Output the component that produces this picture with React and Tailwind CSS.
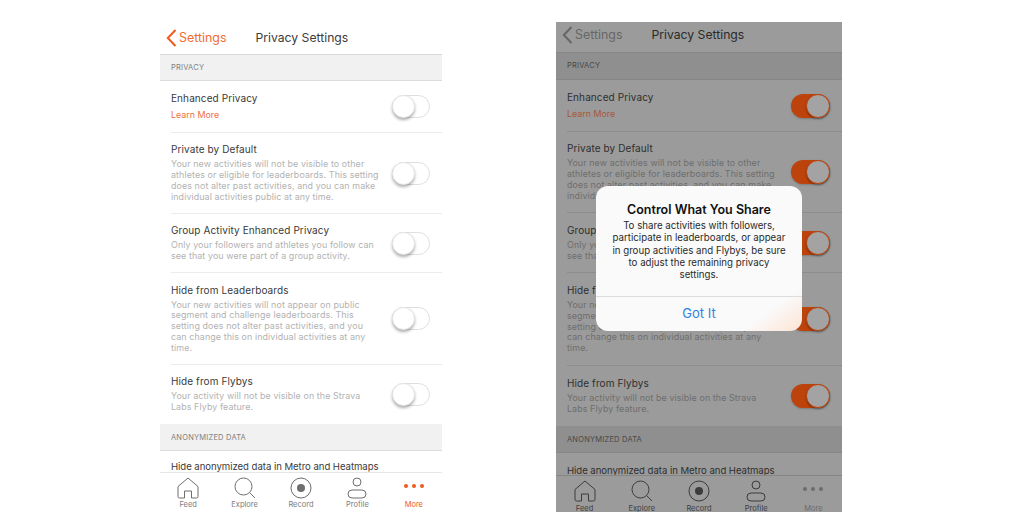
const font = { fontFamily: '"Inter", "Liberation Sans", sans-serif' };

const rows = [
  { title: "Enhanced Privacy", link: "Learn More", h: "h-[52px]", h2: "h-[52px]" },
  { title: "Private by Default", lines: ["Your new activities will not be visible to other", "athletes or eligible for leaderboards. This setting", "does not alter past activities, and you can make", "individual activities public at any time."], h: "h-[81px]", h2: "h-[81px]" },
  { title: "Group Activity Enhanced Privacy", lines: ["Only your followers and athletes you follow can", "see that you were part of a group activity."], h: "h-[59px]", h2: "h-[60px]" },
  { title: "Hide from Leaderboards", lines: ["Your new activities will not appear on public", "segment and challenge leaderboards. This", "setting does not alter past activities, and you", "can change this on individual activities at any", "time."], h: "h-[92px]", h2: "h-[93px]" },
  { title: "Hide from Flybys", lines: ["Your activity will not be visible on the Strava", "Labs Flyby feature."], h: "h-[59px]", h2: "h-[60px]" },
];

const light = {
  wrap: "bg-white w-[282px] h-[492px]",
  nav: "h-[35px] pt-[2px] border-[#d8d8d8]",
  sec: "h-[26px]",
  sec2: "h-[27px] pt-[1px]",
  last: "pt-[9px]",
  tabs: "h-[40px]",
  labelGap: "mt-[1px]",
  title: "text-[#3a3a3a]",
  desc: "text-[#b2b2b2]",
  link: "text-[#f0703c]",
  back: "text-[#ee6c34]",
  head: "text-[#3c3c3c]",
  section: "bg-[#f1f1f1] border-[#dcdcdc]",
  sectionText: "text-[#808080]",
  line: "border-[#ececec]",
  tabLine: "border-[#e6e6e6]",
  tab: "text-[#7c7c7c]",
  active: "text-[#f2591c]",
  icon: "#6e6e6e",
  tabBg: "bg-white",
};
const dark = {
  wrap: "bg-[#9b9b9b] w-[286px] h-[490px]",
  nav: "h-[31px] pb-[4px] border-[#868686]",
  sec: "h-[27px]",
  sec2: "h-[27px] pt-[2px]",
  last: "pt-[11px]",
  tabs: "h-[37px]",
  labelGap: "mt-[2px]",
  title: "text-[#2e2e2e]",
  desc: "text-[#6e6e6e]",
  link: "text-[#a8583a]",
  back: "text-[#666666]",
  head: "text-[#2a2a2a]",
  section: "bg-[#8f8f8f] border-[#868686]",
  sectionText: "text-[#484848]",
  line: "border-[#8c8c8c]",
  tabLine: "border-[#858585]",
  tab: "text-[#404040]",
  active: "text-[#6c6c6c]",
  icon: "#3c3c3c",
  tabBg: "bg-[#9b9b9b]",
};

function Toggle({ on }) {
  if (on) {
    return (
      <div className="w-[39px] h-[24px] rounded-full bg-[#bd430c] flex justify-end shrink-0 shadow-[0_1px_2px_rgba(0,0,0,0.2)]">
        <div className="w-[24px] h-[24px] rounded-full bg-[#a3a3a3] border border-[#bd430c] shadow-[0_1px_2px_rgba(0,0,0,0.35)]" />
      </div>
    );
  }
  return (
    <div className="w-[38px] h-[23px] rounded-full bg-white border border-[#dfdfdf] shrink-0">
      <div className="w-[23px] h-[23px] -mt-px -ml-px rounded-full bg-white border border-[#e4e4e4] shadow-[0_2px_3px_rgba(0,0,0,0.3)]" />
    </div>
  );
}

function Section({ t, h, children }) {
  return (
    <div className={`${h} shrink-0 flex items-center pl-[11px] border-b text-[7.5px] tracking-[0.2px] ${t.section} ${t.sectionText}`}>
      {children}
    </div>
  );
}

function Row({ r, t, on, last }) {
  return (
    <div className={`${on ? r.h2 : r.h} shrink-0 flex items-center pl-[11px]`}>
      <div className={`flex-1 h-full flex items-center border-b ${last ? "border-transparent" : t.line} pr-[12px]`}>
        <div className="flex-1 min-w-0 pb-[1px]">
          <div className={`text-[10px] leading-[14px] tracking-[0.1px] ${t.title}`}>{r.title}</div>
          {r.link && <div className={`text-[8.9px] leading-[12px] mt-[4px] ${t.link}`}>{r.link}</div>}
          {r.lines && (
            <div className={`text-[8.9px] leading-[10.8px] tracking-[0.1px] mt-[3px] whitespace-nowrap ${t.desc}`}>
              {r.lines.map((l) => (
                <div key={l}>{l}</div>
              ))}
            </div>
          )}
        </div>
        <Toggle on={on} />
      </div>
    </div>
  );
}

function TabIcon({ name, color }) {
  const p = { fill: "none", stroke: color, strokeWidth: 1 };
  if (name === "feed")
    return (
      <svg width="22" height="22" viewBox="0 0 22 22">
        <path d="M1 9.5 L11 1 L21 9.5 V19.5 Q21 21 19.5 21 H14.5 V14 H7.5 V21 H2.5 Q1 21 1 19.5 Z" {...p} strokeLinejoin="round" />
      </svg>
    );
  if (name === "explore")
    return (
      <svg width="22" height="22" viewBox="0 0 22 22">
        <circle cx="9.5" cy="9.5" r="8.5" {...p} />
        <path d="M15.5 15.5 L21 21" {...p} />
      </svg>
    );
  if (name === "record")
    return (
      <svg width="22" height="22" viewBox="0 0 22 22">
        <circle cx="11" cy="11" r="10" {...p} />
        <circle cx="11" cy="11" r="4" fill={color} />
      </svg>
    );
  if (name === "profile")
    return (
      <svg width="22" height="22" viewBox="0 0 22 22">
        <circle cx="11" cy="5" r="4" {...p} />
        <rect x="2" y="13" width="18" height="8" rx="4" {...p} />
      </svg>
    );
  return (
    <svg width="22" height="22" viewBox="0 0 22 22">
      <circle cx="3" cy="9" r="2" fill={color} />
      <circle cx="11" cy="9" r="2" fill={color} />
      <circle cx="19" cy="9" r="2" fill={color} />
    </svg>
  );
}

function Phone({ t, on, children }) {
  const tabs = [["feed", "Feed"], ["explore", "Explore"], ["record", "Record"], ["profile", "Profile"], ["more", "More"]];
  return (
    <div className={`relative flex flex-col overflow-hidden ${t.wrap}`}>
      <div className={`${t.nav} shrink-0 flex items-center pl-[6px] border-b`}>
        <svg width="11" height="18" viewBox="0 0 11 18" className="shrink-0">
          <path d="M9.5 1 L1.8 9 L9.5 17" fill="none" stroke={on ? "#666666" : "#ee5a1e"} strokeWidth="2" />
        </svg>
        <span className={`ml-[2px] text-[12.4px] ${t.back}`}>Settings</span>
        <span className={`ml-[29px] text-[12.2px] ${t.head}`}>Privacy Settings</span>
      </div>
      <Section t={t} h={t.sec}>PRIVACY</Section>
      {rows.map((r, i) => (
        <Row key={r.title} r={r} t={t} on={on} last={i === rows.length - 1} />
      ))}
      <Section t={t} h={t.sec2}>ANONYMIZED DATA</Section>
      <div className={`flex-1 min-h-0 overflow-hidden pl-[11px] ${t.last} text-[9.6px] leading-[14px] tracking-[-0.05px] whitespace-nowrap ${t.title}`}>
        Hide anonymized data in Metro and Heatmaps
      </div>
      <div className={`${t.tabs} shrink-0 grid grid-cols-5 border-t ${t.tabLine} ${t.tabBg}`}>
        {tabs.map(([n, l]) => (
          <div key={n} className={`flex flex-col items-center pt-[4px] text-[7.5px] leading-[10px] ${n === "more" ? t.active : t.tab}`}>
            <TabIcon name={n} color={n === "more" ? (on ? "#6c6c6c" : "#f2591c") : t.icon} />
            <span className={t.labelGap}>{l}</span>
          </div>
        ))}
      </div>
      {children}
    </div>
  );
}

export default function App() {
  return (
    <div style={font} className="w-[1024px] h-[512px] bg-white overflow-hidden flex items-end pl-[160px] gap-[114px]">
      <Phone t={light} on={false} />
      <Phone t={dark} on={true}>
        <div className="absolute left-[40px] top-[164px] w-[206px] h-[145px] rounded-[12px] bg-gradient-to-br from-[#fafafa] from-85% to-[#fde3d3] flex flex-col">
          <div className="flex-1 pt-[17px] text-center">
            <div className="text-[12.5px] leading-[14px] font-semibold text-[#111111]">Control What You Share</div>
            <div className="text-[9.7px] leading-[12.3px] mt-[3px] text-[#2a2a2a] whitespace-nowrap">
              <div>To share activities with followers,</div>
              <div>participate in leaderboards, or appear</div>
              <div>in group activities and Flybys, be sure</div>
              <div>to adjust the remaining privacy</div>
              <div>settings.</div>
            </div>
          </div>
          <div className="h-[35px] border-t border-[#dcdcdc] flex items-center justify-center text-[13px] text-[#2a84e0]">Got It</div>
        </div>
      </Phone>
    </div>
  );
}
